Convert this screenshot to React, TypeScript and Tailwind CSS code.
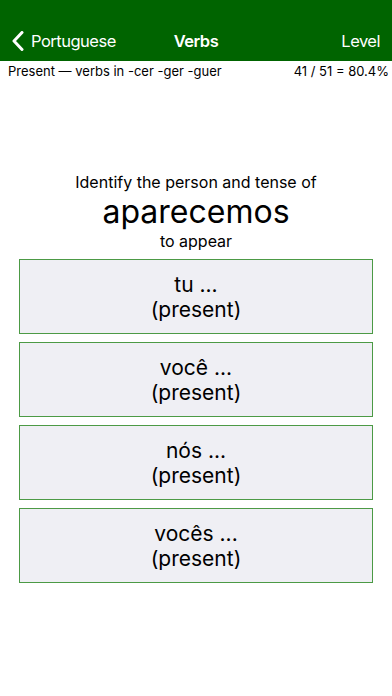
import React from "react";

const options = ["tu ...", "você ...", "nós ...", "vocês ..."];

export default function App() {
  return (
    <div
      className="w-[392px] h-[696px] bg-white overflow-hidden text-black"
      style={{ fontFamily: "Inter, 'Liberation Sans', sans-serif" }}
    >
      <div className="h-[61px] bg-[#006400] flex flex-col">
        <div className="h-[20px]" />
        <div className="relative h-[41px] flex items-center justify-between text-white text-[16.5px] leading-[22px] tracking-[-0.5px]">
          <div className="flex items-center pl-[12px]">
            <svg width="12" height="20" viewBox="0 0 12 20" className="mr-[7px]">
              <path d="M10 1.5 L2 10 L10 18.5" fill="none" stroke="white" strokeWidth="3" strokeLinecap="round" strokeLinejoin="round" />
            </svg>
            <span>Portuguese</span>
          </div>
          <div className="absolute left-0 right-0 text-center font-semibold pointer-events-none">Verbs</div>
          <div className="pr-[12px]">Level</div>
        </div>
      </div>
      <div className="flex justify-between pt-[2px] pl-[8px] pr-[3px] text-[13px] leading-[16px]">
        <span>Present — verbs in -cer -ger -guer</span>
        <span>41 / 51 = 80.4%</span>
      </div>
      <div className="mt-[92px] flex flex-col items-center">
        <div className="text-[16px] leading-[22px]">Identify the person and tense of</div>
        <div className="text-[32px] leading-[38px]">aparecemos</div>
        <div className="text-[16px] leading-[20px]">to appear</div>
      </div>
      <div className="mt-[8px] px-[19px] flex flex-col gap-[8px]">
        {options.map((o) => (
          <div
            key={o}
            className="h-[75px] bg-[#efeff4] border border-[#4c9a45] flex flex-col items-center justify-center text-[21px] leading-[25px]"
          >
            <div>{o}</div>
            <div>(present)</div>
          </div>
        ))}
      </div>
    </div>
  );
}
